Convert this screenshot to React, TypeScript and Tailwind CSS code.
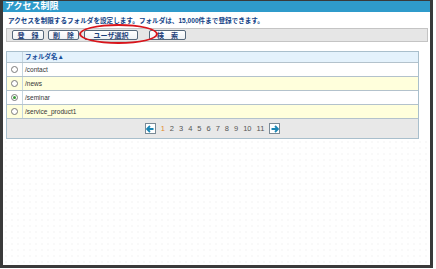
const rows = [
  { name: "/contact", bg: "bg-white", checked: false },
  { name: "/news", bg: "bg-[#ffffdc]", checked: false },
  { name: "/seminar", bg: "bg-white", checked: true },
  { name: "/service_product1", bg: "bg-[#ffffdc]", checked: false },
];

const pages = ["1", "2", "3", "4", "5", "6", "7", "8", "9", "10", "11"];

const Radio = ({ checked }: { checked: boolean }) => (
  <span className="flex size-[7px] items-center justify-center rounded-full border border-[#7a7a7a] bg-white">
    {checked && <span className="size-[3px] rounded-full bg-[#3a9a3a]" />}
  </span>
);

const ArrowBox = ({ dir }: { dir: "left" | "right" }) => (
  <span className="flex size-[11px] items-center justify-center border border-[#7a8a96] bg-white">
    <svg width="8" height="8" viewBox="0 0 8 8">
      {dir === "left" ? (
        <path d="M4 1 L1 4 L4 7 M1.5 4 H7.5" stroke="#1b86b4" strokeWidth="1.8" fill="none" />
      ) : (
        <path d="M4 1 L7 4 L4 7 M6.5 4 H0.5" stroke="#1b86b4" strokeWidth="1.8" fill="none" />
      )}
    </svg>
  </span>
);

const Btn = ({ label, className }: { label: string; className: string }) => (
  <span
    className={`flex h-[10px] items-center justify-center rounded-[2px] border border-[#55677a] bg-[linear-gradient(#ffffff,#eef1f4)] text-[7px] font-bold leading-none text-[#1d3f7a] ${className}`}
  >
    {label}
  </span>
);

export default function App() {
  return (
    <div
      className="h-[269px] w-[436px] bg-white"
      style={{ fontFamily: '"Liberation Sans", "Noto Sans CJK JP", sans-serif' }}
    >
      <div className="flex h-[268px] w-[433px] flex-col border-t border-r-[3px] border-b-[3px] border-l-[3px] border-[#3a3a3a] bg-white">
        <div className="h-[11px] bg-[#2f9bcb] pl-[2px] text-[9px] font-bold leading-[11px] text-white">
          アクセス制限
        </div>

        <p className="mt-[4px] pl-[5px] text-[6.6px] font-bold leading-[9px] text-[#123f86]">
          アクセスを制限するフォルダを設定します。フォルダは、15,000件まで登録できます。
        </p>

        <div className="relative mt-[3px] ml-[3px] mr-[2px] flex h-[14px] items-center border border-[#c4c4c4] bg-[#e6e6e6]">
          <Btn label="登　録" className="ml-[5px] w-[32px]" />
          <Btn label="削　除" className="ml-[4px] w-[31px]" />
          <Btn label="ユーザ選択" className="ml-[5px] w-[54px]" />
          <Btn label="検　索" className="ml-[11px] w-[37px]" />
          <span className="absolute top-[-5px] left-[72px] h-[20px] w-[79px] rounded-[50%] border-2 border-[#d8141b]" />
        </div>

        <div className="mt-[9px] ml-[3px] w-[413px] border border-[#a9bfcc]">
          <div className="flex h-[10px] bg-[#e4f2fc]">
            <span className="w-[16px] border-r border-[#c6d6e0]" />
            <span className="pl-[2px] text-[6.5px] font-bold leading-[10px] text-[#1a4f9a]">
              フォルダ名▲
            </span>
          </div>
          {rows.map((r) => (
            <div key={r.name} className={`flex h-[14px] border-t border-[#b3c2cc] ${r.bg}`}>
              <span className="flex w-[16px] items-center justify-center border-r border-[#c6d6e0]">
                <Radio checked={r.checked} />
              </span>
              <span className="pl-[2px] text-[6.5px] leading-[13px] text-[#333]">{r.name}</span>
            </div>
          ))}
          <div className="flex h-[20px] items-center justify-center gap-[5px] border-t border-[#b3c2cc] bg-[#e8e8e8]">
            <ArrowBox dir="left" />
            <span className="flex gap-[5px] text-[7.5px] text-[#555]">
              {pages.map((p) => (
                <span key={p} className={p === "1" ? "text-[#e38a2c]" : ""}>
                  {p}
                </span>
              ))}
            </span>
            <ArrowBox dir="right" />
          </div>
        </div>

        <div className="flex-1 bg-[radial-gradient(circle,#f1f1f1_0.6px,transparent_0.8px)] bg-[length:6px_6px]" />
      </div>
    </div>
  );
}
